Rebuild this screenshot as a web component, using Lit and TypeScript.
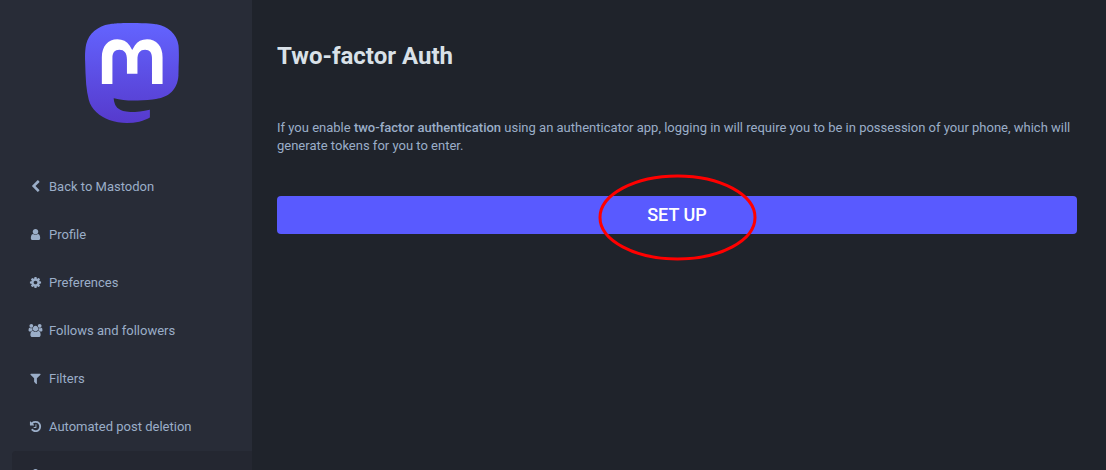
import { LitElement, html, css, svg } from "lit";
import { customElement } from "lit/decorators.js";
import { classMap } from "lit/directives/class-map.js";

interface NavItem {
  label: string;
  icon: string;
  width?: number;
  selected?: boolean;
}

const NAV: NavItem[] = [
  {
    label: "Back to Mastodon",
    icon: "M1427 301l-531 531 531 531q19 19 19 45t-19 45l-166 166q-19 19-45 19t-45-19l-742-742q-19-19-19-45t19-45l742-742q19-19 45-19t45 19l166 166q19 19 19 45t-19 45z",
  },
  {
    label: "Profile",
    icon: "M1536 1399q0 109-62.5 187t-150.5 78h-854q-88 0-150.5-78t-62.5-187q0-85 8.5-160.5t31.5-152 58.5-131 94-89 134.5-34.5q131 128 313 128t313-128q76 0 134.5 34.5t94 89 58.5 131 31.5 152 8.5 160.5zm-256-887q0 159-112.5 271.5t-271.5 112.5-271.5-112.5-112.5-271.5 112.5-271.5 271.5-112.5 271.5 112.5 112.5 271.5z",
  },
  {
    label: "Preferences",
    icon: "M1152 896q0-106-75-181t-181-75-181 75-75 181 75 181 181 75 181-75 75-181zm512-109v222q0 12-8 23t-20 13l-185 28q-19 54-39 91 35 50 107 138 10 12 10 25t-9 23q-27 37-99 108t-94 71q-12 0-26-9l-138-108q-44 23-91 38-16 136-29 186-7 28-36 28h-222q-14 0-24.5-8.5t-11.5-21.5l-28-184q-49-16-90-37l-141 107q-10 9-25 9-14 0-25-11-126-114-165-168-7-10-7-23 0-12 8-23 15-21 51-66.5t54-70.5q-27-50-41-99l-183-27q-13-2-21-12.5t-8-23.5v-222q0-12 8-23t19-13l186-28q14-46 39-92-40-57-107-138-10-12-10-24 0-10 9-23 26-36 98.5-107.5t94.5-71.5q13 0 26 10l138 107q44-23 91-38 16-136 29-186 7-28 36-28h222q14 0 24.5 8.5t11.5 21.5l28 184q49 16 90 37l142-107q9-9 24-9 13 0 25 10 129 119 165 170 7 8 7 22 0 12-8 23-15 21-51 66.5t-54 70.5q26 50 41 98l183 28q13 2 21 12.5t8 23.5z",
  },
  {
    label: "Follows and followers",
    width: 2048,
    icon: "M657 896q-162 5-265 128h-134q-82 0-138-40.5t-56-118.5q0-353 124-353 6 0 43.5 21t97.5 42.5 119 21.5q67 0 133-23-5 37-5 66 0 139 81 256zm1071 637q0 120-73 189.5t-194 69.5h-874q-121 0-194-69.5t-73-189.5q0-53 3.5-103.5t14-109 26.5-108.5 43-97.5 62-81 85.5-53.5 111.5-20q10 0 43 21.5t73 48 107 48 135 21.5 135-21.5 107-48 73-48 43-21.5q61 0 111.5 20t85.5 53.5 62 81 43 97.5 26.5 108.5 14 109 3.5 103.5zm-1024-1277q0 106-75 181t-181 75-181-75-75-181 75-181 181-75 181 75 75 181zm704 384q0 159-112.5 271.5t-271.5 112.5-271.5-112.5-112.5-271.5 112.5-271.5 271.5-112.5 271.5 112.5 112.5 271.5zm576 225q0 78-56 118.5t-138 40.5h-134q-103-123-265-128 81-117 81-256 0-29-5-66 66 23 133 23 59 0 119-21.5t97.5-42.5 43.5-21q124 0 124 353zm-128-609q0 106-75 181t-181 75-181-75-75-181 75-181 181-75 181 75 75 181z",
  },
  {
    label: "Filters",
    icon: "M1595 295q17 41-14 70l-493 493v742q0 42-39 59-13 5-25 5-27 0-45-19l-256-256q-19-19-19-45v-486l-493-493q-31-29-14-70 17-39 59-39h1280q42 0 59 39z",
  },
  {
    label: "Automated post deletion",
    icon: "M1664 896q0 156-61 298t-164 245-245 164-298 61q-172 0-327-72.5t-264-204.5q-7-10-6.5-22.5t8.5-20.5l137-138q10-9 25-9 16 2 23 12 73 95 179 147t225 52q104 0 198.5-40.5t163.5-109.5 109.5-163.5 40.5-198.5-40.5-198.5-109.5-163.5-163.5-109.5-198.5-40.5q-98 0-188 35.5t-160 101.5l137 138q31 30 14 69-17 40-59 40h-448q-26 0-45-19t-19-45v-448q0-42 40-59 39-17 69 14l130 129q107-101 244.5-156.5t284.5-55.5q156 0 298 61t245 164 164 245 61 298zm-640-288v448q0 14-9 23t-23 9h-320q-14 0-23-9t-9-23v-64q0-14 9-23t23-9h224v-352q0-14 9-23t23-9h64q14 0 23 9t9 23z",
  },
  {
    label: "Account",
    selected: true,
    icon: "M640 768h512v-192q0-106-75-181t-181-75-181 75-75 181v192zm832 96v576q0 40-28 68t-68 28h-960q-40 0-68-28t-28-68v-576q0-40 28-68t68-28h32v-192q0-184 132-316t316-132 316 132 132 316v192h32q40 0 68 28t28 68z",
  },
];

@customElement("side-nav")
export class SideNav extends LitElement {
  static styles = css`
    :host {
      display: block;
    }
    .logo {
      display: flex;
      justify-content: center;
      padding: 23px 0 40px;
    }
    .logo svg {
      display: block;
      width: 95px;
      height: 100px;
    }
    .list {
      list-style: none;
      margin: 0;
      padding: 0;
    }
    .link {
      display: flex;
      align-items: flex-start;
      gap: 5px;
      padding: 15px;
      border-radius: 4px 0 0 4px;
      color: #9baec8;
      font-size: 13px;
      line-height: 18px;
      text-decoration: none;
    }
    .link.selected {
      background: #242731;
    }
    .link:hover {
      color: #d9e1e8;
    }
    .icon {
      flex: none;
      width: 17px;
      height: 13px;
      margin-top: 2px;
      fill: currentColor;
    }
  `;

  render() {
    return html`
      <a class="logo" href="#" aria-label="Mastodon">
        <svg viewBox="0 0 75 79" aria-hidden="true">
          <defs>
            <linearGradient id="fade" x1="0" y1="0" x2="0" y2="1">
              <stop offset="0" stop-color="#6364ff" />
              <stop offset="1" stop-color="#563acc" />
            </linearGradient>
          </defs>
          <path
            fill="url(#fade)"
            d="M73.8393 17.4898C72.6973 9.00165 65.2994 2.31235 56.5296 1.01614C55.05 0.797115 49.4441 0 36.4582 0H36.3612C23.3717 0 20.585 0.797115 19.1054 1.01614C10.5798 2.27644 2.79399 8.28712 0.904997 16.8758C-0.00358524 21.1056 -0.100549 25.7949 0.0682394 30.0965C0.308852 36.2651 0.355538 42.423 0.91577 48.5665C1.30307 52.6474 1.97872 56.6957 2.93763 60.6812C4.73325 68.042 12.0019 74.1676 19.1233 76.6666C26.7478 79.2728 34.9474 79.7055 42.8039 77.9162C43.6682 77.7151 44.5217 77.4817 45.3645 77.216C47.275 76.6092 49.5123 75.9305 51.1571 74.7385C51.1797 74.7217 51.2316 74.6229 51.2325 74.5948V68.6416C51.2 68.5 51.1 68.46 51.0171 68.4729C45.9835 69.675 40.8254 70.2777 35.6502 70.2682C26.7439 70.2682 24.3486 66.042 23.6626 64.2826C23.1113 62.762 22.7612 61.1759 22.6212 59.5646C22.62 59.45 22.72 59.36 22.8367 59.3886C27.7864 60.5826 32.8604 61.1853 37.9522 61.1839C39.1768 61.1839 40.3978 61.1839 41.6224 61.1516C46.7435 61.008 52.1411 60.7459 57.1796 59.7621C57.3053 59.7369 57.431 59.7154 57.5387 59.6831C65.4861 58.157 73.0493 53.3672 73.8178 41.2381C73.8465 40.7606 73.9184 36.2364 73.9184 35.7409C73.9219 34.0569 74.4606 23.7949 73.8393 17.4898Z"
          />
          <path
            fill="#fff"
            d="M61.2484 27.0263V48.114H52.8916V27.6475C52.8916 23.3388 51.096 21.1413 47.4437 21.1413C43.4287 21.1413 41.4177 23.7409 41.4177 28.8755V40.0782H33.1111V28.8755C33.1111 23.7409 31.0965 21.1413 27.0815 21.1413C23.4507 21.1413 21.6371 23.3388 21.6371 27.6475V48.114H13.284V27.0263C13.284 22.7176 14.384 19.2946 16.5843 16.7572C18.8539 14.2258 21.8311 12.926 25.5264 12.926C29.8036 12.926 33.0357 14.5705 35.1905 17.8559L37.2698 21.346L39.3527 17.8559C41.5074 14.5705 44.7395 12.926 49.0095 12.926C52.7013 12.926 55.6784 14.2258 57.9553 16.7572C60.1531 19.2922 61.2508 22.7152 61.2484 27.0263Z"
          />
        </svg>
      </a>
      <nav aria-label="Settings">
        <ul class="list">
          ${NAV.map(
            (item) => html`<li>
              <a class=${classMap({ link: true, selected: !!item.selected })} href="#">
                <svg class="icon" viewBox="0 0 ${item.width ?? 1792} 1792" aria-hidden="true">
                  ${svg`<path d=${item.icon} />`}
                </svg>
                <span>${item.label}</span>
              </a>
            </li>`
          )}
        </ul>
      </nav>
    `;
  }
}

@customElement("app-root")
export class AppRoot extends LitElement {
  static styles = css`
    :host {
      display: flex;
      height: 100vh;
      overflow: hidden;
      background: #1f232b;
      color: #9baec8;
      font-family: Roboto, sans-serif;
      font-size: 13px;
      line-height: 18px;
    }
    .sidebar {
      flex: none;
      width: 240px;
      padding-left: 12px;
      background: #282c37;
    }
    .content {
      flex: 1;
      min-width: 0;
      padding: 42px 29px 24px 25px;
    }
    .title {
      margin: 0 0 49px;
      color: #d9e1e8;
      font-size: 24px;
      font-weight: 700;
      line-height: 28px;
    }
    .hint {
      margin: 0 0 41px;
    }
    .hint strong {
      font-weight: 500;
    }
    .action {
      position: relative;
    }
    .button {
      display: block;
      width: 100%;
      margin: 0;
      padding: 10px;
      border: 0;
      border-radius: 4px;
      background: #595aff;
      color: #fff;
      font: 500 18px/18px Roboto, sans-serif;
      text-transform: uppercase;
      cursor: pointer;
    }
    .marker {
      position: absolute;
      top: -22px;
      left: 50%;
      width: 160px;
      height: 88px;
      margin-left: -80px;
      pointer-events: none;
    }
  `;

  render() {
    return html`
      <side-nav class="sidebar"></side-nav>
      <main class="content">
        <h1 class="title">Two-factor Auth</h1>
        <p class="hint">
          If you enable <strong>two-factor authentication</strong> using an authenticator app,
          logging in will require you to be in possession of your phone, which will generate tokens
          for you to enter.
        </p>
        <div class="action">
          <button class="button" type="button">Set up</button>
          <svg class="marker" viewBox="0 0 160 88" aria-hidden="true">
            <ellipse cx="80.5" cy="43.5" rx="77.5" ry="41.5" fill="none" stroke="#f00" stroke-width="3" />
          </svg>
        </div>
      </main>
    `;
  }
}
